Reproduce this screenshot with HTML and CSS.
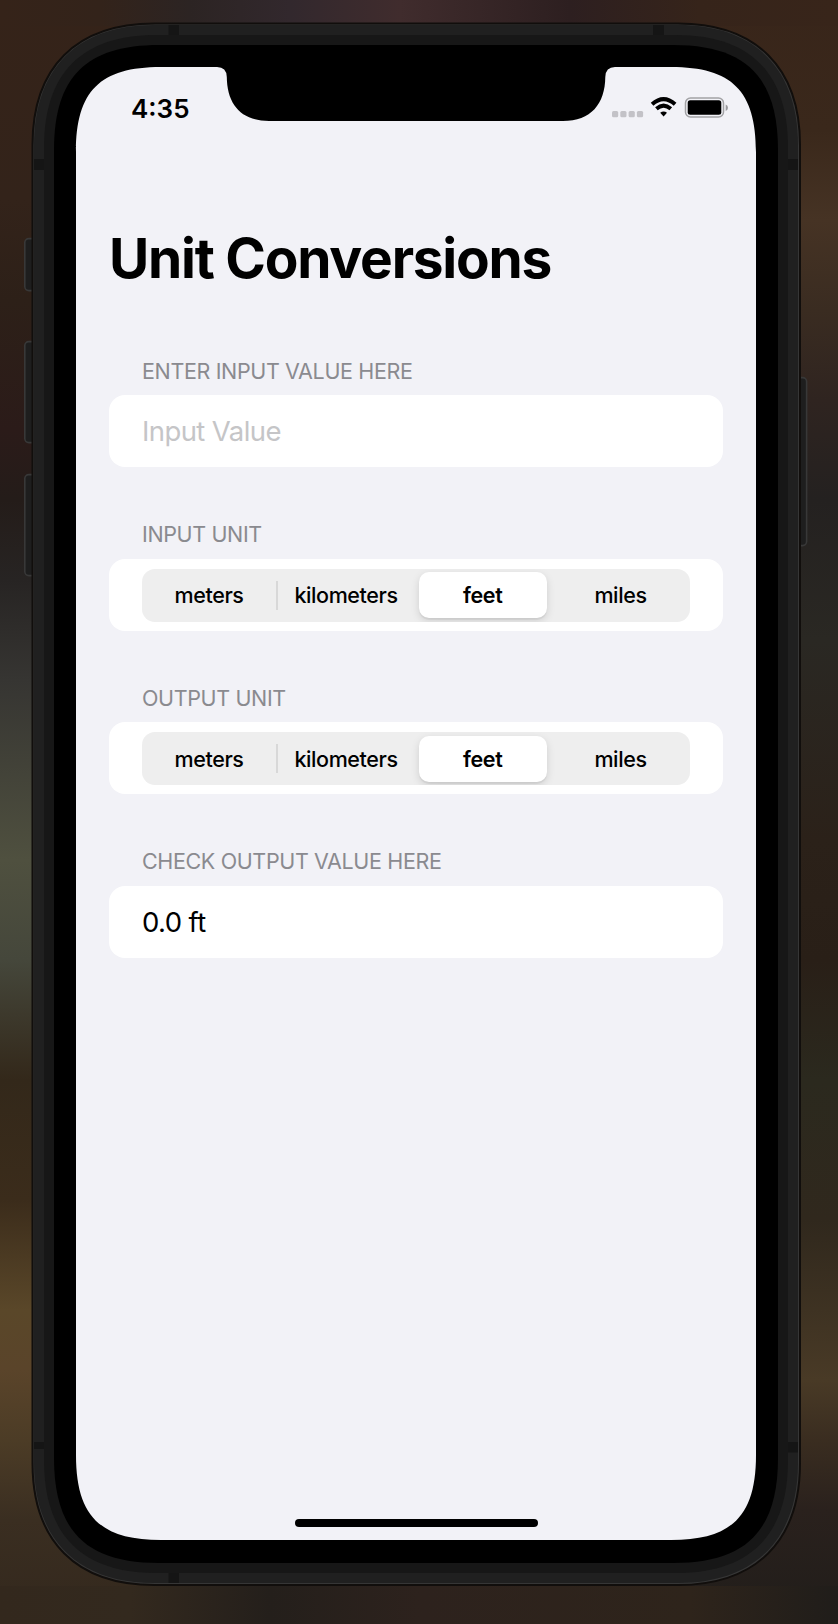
FILE: index.html
```html
<!DOCTYPE html>
<html lang="en">
<head>
<meta charset="utf-8">
<title>Unit Conversions</title>
<link rel="stylesheet" href="styles.css">
</head>
<body>
<div class="backdrop">
  <svg class="device" width="838" height="1624" viewBox="0 0 838 1624" aria-hidden="true">
    <g fill="#1e1e1e" stroke="#383838" stroke-width="1.6">
      <rect x="24.8" y="238.6" width="16" height="52" rx="4"/>
      <rect x="24.8" y="341.6" width="16" height="101" rx="4"/>
      <rect x="24.8" y="474.6" width="16" height="101" rx="4"/>
      <rect x="790" y="377.6" width="16.6" height="168" rx="4"/>
    </g>
    <path fill="#363636" stroke="#110e0c" stroke-width="2" d="M32.500 145C32.500 67.500 76 23.500 154.500 23.500H678C756 23.500 800 67.500 800 145V1463C800 1541 756 1585 678 1585H154.500C76 1585 32.500 1541 32.500 1463Z"/>
    <path fill="#202020" d="M34 145C34 68.500 77.500 25 154 25H678C754.500 25 798 68.500 798 145V1463C798 1539.500 754.500 1583 678 1583H154C77.500 1583 34 1539.500 34 1463Z"/>
    <path fill="#151515" d="M168.500 25h10.500v11h-10.500zM653 25h11v11h-11zM168.500 1572h10.500v11h-10.500zM34 159h11v11h-11zM787 159h11v11h-11zM34 1442h11v7h-11zM787 1442h11v10.500h-11z"/>
    <path fill="#171717" d="M44 147C44 73 82 35 156 35H676C750 35 788 73 788 147V1461C788 1535 750 1573 676 1573H156C82 1573 44 1535 44 1461Z"/>
    <path fill="#000" d="M54 150C54 77 86 45 159 45H673C746 45 778 77 778 150V1458C778 1531 746 1563 673 1563H159C86 1563 54 1531 54 1458Z"/>
    <path fill="#f2f2f7" d="M76 152C76 91 100 67 161 67H217Q226.500 67 226.800 77C227 104 241 121 269 121H563C591 121 605 104 605.300 77Q605.600 67 615 67H671C732 67 756 91 756 152V1455C756 1516 732 1540 671 1540H161C100 1540 76 1516 76 1455Z"/>
  </svg>
  <main class="screen">
    <header class="status">
      <time class="clock">4:35</time>
      <svg class="indicators" width="118" height="24" viewBox="0 0 118 24" aria-label="Signal, Wi-Fi and battery">
        <g fill="#c3c2c7"><rect x="0" y="15" width="6.200" height="6.200" rx="1.500"/><rect x="8.300" y="15" width="6.200" height="6.200" rx="1.500"/><rect x="16.600" y="15" width="6.200" height="6.200" rx="1.500"/><rect x="24.900" y="15" width="6.200" height="6.200" rx="1.500"/></g>
        <g fill="none" stroke="#000" stroke-width="4"><path d="M40.100 8.200Q51.600-2 63.100 8.200"/><path d="M44.400 12.700Q51.600 6.600 58.800 12.700"/></g>
        <path d="M48.200 16.800Q51.600 14 55 16.800L51.600 20.600Z"/>
        <rect x="73.500" y="2" width="38" height="19" rx="5" fill="none" stroke="#a2a2a5" stroke-width="1.500"/>
        <rect x="75.700" y="4.300" width="33.600" height="14.400" rx="2.500"/>
        <path fill="#98989b" d="M113.700 8.500Q116 9.500 116 11.700T113.700 15Z"/>
      </svg>
    </header>
    <h1 class="title">Unit Conversions</h1>
    <section class="group">
      <h2 class="label">ENTER INPUT VALUE HERE</h2>
      <div class="card placeholder">Input Value</div>
    </section>
    <section class="group">
      <h2 class="label">INPUT UNIT</h2>
      <div class="card">
        <div class="segments"><span class="meters">meters</span><i class="divider"></i><span class="kilometers">kilometers</span><span class="selected">feet</span><span class="miles">miles</span></div>
      </div>
    </section>
    <section class="group">
      <h2 class="label">OUTPUT UNIT</h2>
      <div class="card">
        <div class="segments"><span class="meters">meters</span><i class="divider"></i><span class="kilometers">kilometers</span><span class="selected">feet</span><span class="miles">miles</span></div>
      </div>
    </section>
    <section class="group">
      <h2 class="label">CHECK OUTPUT VALUE HERE</h2>
      <div class="card result">0.0 ft</div>
    </section>
    <div class="home"></div>
  </main>
</div>
</body>
</html>
```
FILE: styles.css
```css
* { box-sizing: border-box; }
body { margin: 0; font-family: Inter, "Liberation Sans", sans-serif; color: #000; }
.backdrop {
  position: relative;
  width: 838px;
  height: 1624px;
  padding: 67px 82px 84px 76px;
  overflow: hidden;
  background:
    linear-gradient(90deg, #352319 0, #33231a 100px, #2c2423 190px, #32282d 290px, #402c2d 400px, #2d1f20 570px, #36241a 700px, #38251a) 0 0 / 100% 26px no-repeat,
    linear-gradient(90deg, #33281d 0, #33291e 130px, #241f1b 270px, #2d221d 420px, #2e241b 690px, #201d1a) 0 100% / 100% 38px no-repeat,
    linear-gradient(#352319 0, #33231a 200px, #2d2018 300px, #2b1b19 430px, #241c19 500px, #272423 580px, #363532 680px, #4f503f 860px, #45473b 960px, #33281a 1080px, #3b2c1b 1200px, #5a4729 1310px, #5a442a 1370px, #4c3c26 1440px, #3a2e21 1520px, #33281d) 0 0 / 50% 100% no-repeat,
    linear-gradient(#38251a 0, #3a281b 130px, #463324 220px, #3a2c21 310px, #2f2420 400px, #242120 500px, #2a2823 640px, #2b2119 840px, #291f17 960px, #2b291e 1080px, #30281d 1220px, #493a26 1380px, #3a2d20 1440px, #2a211d 1510px, #201d1a) 100% 0 / 50% 100% no-repeat;
}
.device { position: absolute; left: 0; top: 0; }
.screen {
  position: relative;
  width: 680px;
  height: 1473px;
  padding: 0 33px 13px;
  display: flex;
  flex-direction: column;
}
.status { display: flex; justify-content: space-between; align-items: flex-start; height: 157px; padding: 29px 22px 0 22px; margin-right: -29px; }
.clock { padding-top: .5px; font-size: 26px; line-height: 24px; font-weight: 600; }
.indicators { display: block; }
.title { margin: 0 0 63.500px; height: 68px; font-size: 55px; line-height: 68px; font-weight: 700; letter-spacing: -1.240px; white-space: nowrap; }
.group { margin-bottom: 52.170px; }
.label { margin: 0 0 9.500px 33px; height: 30px; font-size: 21.500px; line-height: 30px; font-weight: 400; letter-spacing: -.360px; color: #8a8a8f; white-space: nowrap; }
.card { height: 72px; border-radius: 16px; background: #fff; padding: 10px 33px; }
.placeholder, .result { font-size: 27.500px; line-height: 52px; letter-spacing: -.600px; }
.placeholder { color: #c5c5c7; }
.segments { display: grid; grid-template-columns: 134px 2px 139px 132px 1fr; align-items: center; height: 53px; border-radius: 13px; background: #eee; text-align: center; font-size: 21.500px; font-weight: 500; letter-spacing: -.400px; overflow: hidden; }
.divider { width: 1.500px; height: 29px; background: #d8d8d8; }
.kilometers { padding-right: 3px; }
.miles { padding-left: 2px; }
.selected { height: 46px; margin: 0 2px 0 1.500px; border-radius: 10px; line-height: 46px; font-weight: 600; background: #fff; box-shadow: 0 3px 8px rgba(0, 0, 0, .13), 0 2px 1px rgba(0, 0, 0, .05); }
.home { width: 243px; height: 8px; border-radius: 4px; background: #000; margin: auto auto 0 185.500px; }
```
